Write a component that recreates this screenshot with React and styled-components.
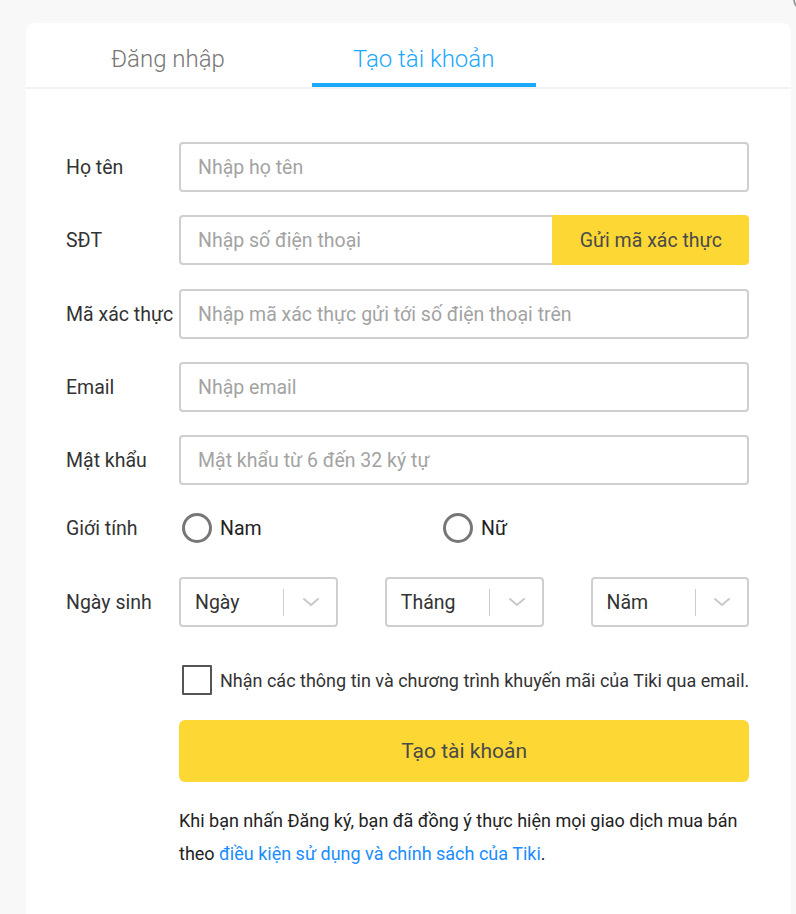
import React, { useState } from 'react';
import styled, { createGlobalStyle } from 'styled-components';

const GlobalStyle = createGlobalStyle`
    * { box-sizing: border-box; }
    body {
        margin: 0;
        background: #f8f8f8;
        font-family: Roboto, "Noto Sans", sans-serif;
        color: #333;
    }
`;

const days = ['Ngày', 'Tháng', 'Năm'];

function ChevronDown() {
    return (
        <svg width="18" height="10" viewBox="0 0 18 10" fill="none">
            <path d="M2 2l7 6 7-6" stroke="#c9c9c9" strokeWidth="2" strokeLinecap="round" strokeLinejoin="round" />
        </svg>
    );
}

function App() {
    const [tab, setTab] = useState(1);
    const [gender, setGender] = useState(null);
    const [subscribe, setSubscribe] = useState(false);

    return (
        <Page>
            <GlobalStyle />
            <CloseCircle />
            <Card>
                <Tabs>
                    <Tab active={tab === 0} onClick={() => setTab(0)}>Đăng nhập</Tab>
                    <Tab active={tab === 1} onClick={() => setTab(1)}>Tạo tài khoản</Tab>
                </Tabs>
                <Form>
                    <Row mb={23}>
                        <Label>Họ tên</Label>
                        <Input placeholder="Nhập họ tên" />
                    </Row>
                    <Row mb={24}>
                        <Label>SĐT</Label>
                        <InputGroup>
                            <GroupInput placeholder="Nhập số điện thoại" />
                            <SendButton>Gửi mã xác thực</SendButton>
                        </InputGroup>
                    </Row>
                    <Row mb={23}>
                        <Label>Mã xác thực</Label>
                        <Input placeholder="Nhập mã xác thực gửi tới số điện thoại trên" />
                    </Row>
                    <Row mb={23}>
                        <Label>Email</Label>
                        <Input placeholder="Nhập email" />
                    </Row>
                    <Row mb={23}>
                        <Label>Mật khẩu</Label>
                        <Input type="password" placeholder="Mật khẩu từ 6 đến 32 ký tự" />
                    </Row>
                    <Row mb={29} h={40}>
                        <Label>Giới tính</Label>
                        <RadioGroup>
                            <RadioOption w={261} onClick={() => setGender('m')}>
                                <RadioCircle checked={gender === 'm'} />
                                Nam
                            </RadioOption>
                            <RadioOption onClick={() => setGender('f')}>
                                <RadioCircle checked={gender === 'f'} />
                                Nữ
                            </RadioOption>
                        </RadioGroup>
                    </Row>
                    <Row mb={38}>
                        <Label>Ngày sinh</Label>
                        <DateGrid>
                            {days.map((d) => (
                                <Select key={d}>
                                    <SelectValue>{d}</SelectValue>
                                    <Separator />
                                    <Arrow><ChevronDown /></Arrow>
                                </Select>
                            ))}
                        </DateGrid>
                    </Row>
                    <Row mb={25} h={30}>
                        <Label />
                        <CheckRow onClick={() => setSubscribe(!subscribe)}>
                            <CheckBox checked={subscribe} />
                            Nhận các thông tin và chương trình khuyến mãi của Tiki qua email.
                        </CheckRow>
                    </Row>
                    <Row mb={22} h={62}>
                        <Label />
                        <SubmitButton>Tạo tài khoản</SubmitButton>
                    </Row>
                    <Row h="auto">
                        <Label />
                        <Terms>
                            Khi bạn nhấn Đăng ký, bạn đã đồng ý thực hiện mọi giao dịch mua bán theo{' '}
                            <a href="#">điều kiện sử dụng và chính sách của Tiki</a>.
                        </Terms>
                    </Row>
                </Form>
            </Card>
        </Page>
    );
}

export default App;

const Page = styled.div`
    position: relative;
    min-height: 100vh;
    padding: 23px 5px 0 26px;
    display: flex;
    overflow: hidden;
`;

const CloseCircle = styled.div`
    position: absolute;
    top: -14px;
    left: 793px;
    width: 26px;
    height: 26px;
    border-radius: 50%;
    border: 2px solid #9a9a9a;
    background: #fff;
`;

const Card = styled.div`
    flex: 1;
    background: #fff;
    border-radius: 8px 8px 0 0;
`;

const Tabs = styled.div`
    display: flex;
    gap: 45px;
    padding-left: 44px;
    height: 66px;
    border-bottom: 2px solid #f2f2f2;
`;

const Tab = styled.div`
    height: 64px;
    padding: 22px 42px 0 41px;
    font-size: 24px;
    font-weight: 300;
    line-height: 28px;
    color: ${(p) => (p.active ? '#1ba8ff' : '#777')};
    border-bottom: 4px solid ${(p) => (p.active ? '#1ba8ff' : 'transparent')};
    cursor: pointer;
    white-space: nowrap;
`;

const Form = styled.div`
    padding: 53px 42px 0 40px;
`;

const Row = styled.div`
    display: flex;
    align-items: ${(p) => (p.h === 'auto' ? 'flex-start' : 'center')};
    height: ${(p) => (p.h === 'auto' ? 'auto' : `${p.h || 50}px`)};
    margin-bottom: ${(p) => p.mb || 0}px;
`;

const Label = styled.div`
    width: 113px;
    flex-shrink: 0;
    font-size: 19.5px;
    color: #333;
    white-space: nowrap;
`;

const Input = styled.input`
    flex: 1;
    height: 50px;
    border: 2px solid #cfcfcf;
    border-radius: 4px;
    padding: 0 17px;
    font-family: inherit;
    font-size: 19.5px;
    color: #333;
    outline: none;
    &::placeholder {
        color: #a3a3a3;
    }
`;

const InputGroup = styled.div`
    flex: 1;
    display: flex;
    height: 50px;
`;

const GroupInput = styled(Input)`
    border-right: none;
    border-radius: 4px 0 0 4px;
`;

const SendButton = styled.button`
    width: 197px;
    border: none;
    border-radius: 0 4px 4px 0;
    background: #fdd835;
    color: #4a4a4a;
    font-family: inherit;
    font-size: 19.5px;
    cursor: pointer;
`;

const RadioGroup = styled.div`
    display: flex;
    align-items: center;
    padding-left: 3px;
`;

const RadioOption = styled.label`
    display: flex;
    align-items: center;
    gap: 8px;
    width: ${(p) => (p.w ? `${p.w}px` : 'auto')};
    font-size: 19.5px;
    color: #222;
    cursor: pointer;
`;

const RadioCircle = styled.span`
    width: 30px;
    height: 30px;
    border-radius: 50%;
    border: 3px solid #777;
    background: ${(p) => (p.checked ? 'radial-gradient(circle, #1ba8ff 0 6px, #fff 7px)' : '#fff')};
`;

const DateGrid = styled.div`
    flex: 1;
    display: grid;
    grid-template-columns: repeat(3, 1fr);
    gap: 47px;
`;

const Select = styled.div`
    height: 50px;
    display: flex;
    align-items: center;
    border: 2px solid #cfcfcf;
    border-radius: 4px;
    padding-left: 14px;
    cursor: pointer;
`;

const SelectValue = styled.span`
    width: 88px;
    font-size: 19.5px;
    color: #333;
`;

const Separator = styled.span`
    width: 1px;
    height: 27px;
    background: #cccccc;
`;

const Arrow = styled.span`
    flex: 1;
    display: flex;
    justify-content: center;
    align-items: center;
    padding-left: 2px;
`;

const CheckRow = styled.label`
    display: flex;
    align-items: center;
    gap: 8px;
    padding-left: 3px;
    font-size: 18px;
    color: #333;
    white-space: nowrap;
    cursor: pointer;
`;

const CheckBox = styled.span`
    width: 30px;
    height: 30px;
    border: 2px solid #555;
    border-radius: 1px;
    background: ${(p) => (p.checked ? '#1ba8ff' : '#fff')};
`;

const SubmitButton = styled.button`
    flex: 1;
    height: 62px;
    border: none;
    border-radius: 6px;
    background: #fdd835;
    color: #4a4a4a;
    font-family: inherit;
    font-size: 21px;
    cursor: pointer;
`;

const Terms = styled.p`
    flex: 1;
    margin: 0;
    font-size: 18px;
    line-height: 33px;
    color: #222;
    a {
        color: #1a8dff;
        text-decoration: none;
    }
`;
